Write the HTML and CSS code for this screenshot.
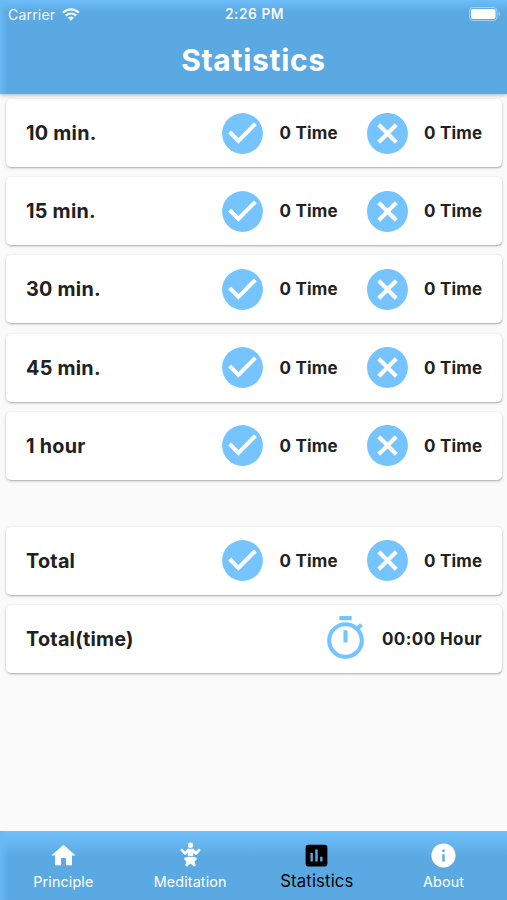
FILE: index.html
```html
<!DOCTYPE html>
<html lang="en">
<head>
<meta charset="utf-8">
<title>Statistics</title>
<link rel="stylesheet" href="styles.css">
</head>
<body>
<svg class="defs" aria-hidden="true">
  <symbol id="check" viewBox="0 0 24 24"><circle cx="12" cy="12" r="10"/><path class="cut" d="m10 17-5-5 1.41-1.41L10 14.17l7.59-7.59L19 8z"/></symbol>
  <symbol id="cross" viewBox="0 0 24 24"><path d="M12 2C6.47 2 2 6.47 2 12s4.47 10 10 10 10-4.47 10-10S17.53 2 12 2zm5 13.59L15.59 17 12 13.41 8.41 17 7 15.59 10.59 12 7 8.41 8.41 7 12 10.59 15.59 7 17 8.41 13.41 12 17 15.59z"/></symbol>
  <symbol id="timer" viewBox="0 0 24 24"><path d="M15 1H9v2h6V1zm-4 13h2V8h-2v6zm8.03-6.61 1.42-1.42c-.43-.51-.9-.99-1.41-1.41l-1.42 1.42C16.07 4.74 14.12 4 12 4c-4.97 0-9 4.03-9 9s4.02 9 9 9 9-4.03 9-9c0-2.12-.74-4.07-1.97-5.61zM12 20c-3.87 0-7-3.13-7-7s3.13-7 7-7 7 3.13 7 7-3.13 7-7 7z"/></symbol>
</svg>
<header class="header">
  <div class="status">
    <div class="carrier"><span>Carrier</span>
      <svg class="wifi" viewBox="0 0 18 13"><path d="M1 4.7C5.5.3 12.5.3 17 4.7M3.8 7.6c3-2.8 7.4-2.8 10.4 0"/><path class="dot" d="M9 12.8 5.9 9.7c1.8-1.5 4.4-1.5 6.2 0z"/></svg>
    </div>
    <div class="clock">2:26 PM</div>
    <svg class="battery" viewBox="0 0 32 14"><rect class="shell" x=".5" y=".5" width="27.5" height="13" rx="3.5"/><rect x="2" y="2" width="24.5" height="10" rx="2"/><path class="tip" d="M29.6 4.8c2 .6 2 3.8 0 4.4z"/></svg>
  </div>
  <h1 class="title">Statistics</h1>
</header>
<main class="content">
  <section class="list">
    <div class="card"><span class="label">10 min.</span><svg class="icon"><use href="#check"/></svg><span class="count">0 Time</span><svg class="icon next"><use href="#cross"/></svg><span class="count">0 Time</span></div>
    <div class="card"><span class="label">15 min.</span><svg class="icon"><use href="#check"/></svg><span class="count">0 Time</span><svg class="icon next"><use href="#cross"/></svg><span class="count">0 Time</span></div>
    <div class="card"><span class="label">30 min.</span><svg class="icon"><use href="#check"/></svg><span class="count">0 Time</span><svg class="icon next"><use href="#cross"/></svg><span class="count">0 Time</span></div>
    <div class="card"><span class="label">45 min.</span><svg class="icon"><use href="#check"/></svg><span class="count">0 Time</span><svg class="icon next"><use href="#cross"/></svg><span class="count">0 Time</span></div>
    <div class="card"><span class="label">1 hour</span><svg class="icon"><use href="#check"/></svg><span class="count">0 Time</span><svg class="icon next"><use href="#cross"/></svg><span class="count">0 Time</span></div>
  </section>
  <section class="list">
    <div class="card"><span class="label">Total</span><svg class="icon"><use href="#check"/></svg><span class="count">0 Time</span><svg class="icon next"><use href="#cross"/></svg><span class="count">0 Time</span></div>
    <div class="card"><span class="label">Total(time)</span><svg class="icon"><use href="#timer"/></svg><span class="count hours">00:00 Hour</span></div>
  </section>
</main>
<nav class="tabs">
  <a class="tab"><svg viewBox="0 0 24 24"><path d="M10 20v-6h4v6h5v-8h3L12 3 2 12h3v8z"/></svg><span>Principle</span></a>
  <a class="tab"><svg viewBox="-1.8 -1.2 27.6 27.6"><circle cx="12" cy="2.8" r="2.5"/><path d="M9.2 6.2h5.6l2.4 2.7 2.9-3 1.7 1.5-3.9 4.4h-1.5L14.6 10v3.2H9.4V10l-1.8 1.8H6.1L2.2 7.4l1.7-1.5 2.9 3z"/><path d="M9 14h6l2.9.7v1.8l-2.1 2 1.3 3.3-1.8 1.5-2.3-2.3-1-.3-1 .3-2.3 2.3-1.8-1.5 1.3-3.3-2.1-2v-1.8z"/></svg><span>Meditation</span></a>
  <a class="tab active"><svg viewBox="0 0 24 24"><path d="M19 3H5c-1.1 0-2 .9-2 2v14c0 1.1.9 2 2 2h14c1.1 0 2-.9 2-2V5c0-1.1-.9-2-2-2zM9 17H7v-7h2v7zm4 0h-2V7h2v10zm4 0h-2v-4h2v4z"/></svg><span>Statistics</span></a>
  <a class="tab"><svg viewBox="0 0 24 24"><path d="M12 2C6.48 2 2 6.48 2 12s4.48 10 10 10 10-4.48 10-10S17.52 2 12 2zm1 15h-2v-6h2v6zm0-8h-2V7h2v2z"/></svg><span>About</span></a>
</nav>
</body>
</html>
```
FILE: styles.css
```css
* { box-sizing: border-box; }
body {
  margin: 0;
  height: 900px;
  display: flex;
  flex-direction: column;
  overflow: hidden;
  background: #fafafa;
  color: #212121;
  font-family: Inter, Roboto, sans-serif;
}
.defs { position: absolute; width: 0; height: 0; }
.header {
  height: 94px;
  flex: none;
  background: linear-gradient(90deg, #69b9f5, rgba(105, 185, 245, 0) 7px), linear-gradient(#6cbdf9, #5aa9e2 12px);
  box-shadow: 0 1px 4px rgba(0, 0, 0, .3);
  color: #fff;
}
.status {
  height: 27px;
  padding: 0 6px 0 8px;
  display: grid;
  grid-template-columns: 1fr auto 1fr;
  align-items: center;
  font-size: 14px;
  line-height: 27px;
}
.carrier { display: flex; align-items: center; gap: 7px; letter-spacing: .2px; opacity: .92; }
.wifi { width: 18px; height: 13px; fill: none; stroke: #fff; stroke-width: 2.2; }
.wifi .dot { fill: #fff; stroke: none; }
.clock { padding-top: 1px; font-size: 13.8px; font-weight: 600; letter-spacing: .5px; opacity: .93; }
.battery { width: 32px; height: 14px; justify-self: end; fill: #fff; }
.battery .shell { fill: none; stroke: #fff; stroke-opacity: .45; }
.battery .tip { opacity: .45; }
.title {
  margin: 0;
  text-align: center;
  font-size: 30px;
  line-height: 66px;
  font-weight: 700;
  letter-spacing: .7px;
}
.content {
  flex: 1;
  padding: 5px 5px 0 6px;
  display: flex;
  flex-direction: column;
  gap: 47px;
}
.list { display: flex; flex-direction: column; gap: 10.2px; }
.card {
  height: 68px;
  padding: 0 20px;
  display: flex;
  align-items: center;
  background: #fff;
  border-radius: 5px;
  box-shadow: 0 1px 3px rgba(0, 0, 0, .24), 1px 2px 1px -1px rgba(0, 0, 0, .12);
}
.label { flex: 1; font-size: 19.8px; font-weight: 650; letter-spacing: .25px; }
.icon { width: 49px; height: 49px; margin-right: 12.5px; fill: #75c4ff; }
.icon.next { margin-left: 25px; }
.cut { fill: #fff; }
.count { width: 58px; font-size: 17px; font-weight: 650; letter-spacing: .2px; white-space: nowrap; }
.count.hours { width: 100px; letter-spacing: .4px; }
.tabs {
  height: 69px;
  flex: none;
  display: flex;
  background: linear-gradient(90deg, #69b9f5, rgba(105, 185, 245, 0) 8px), linear-gradient(#70c0fb, #5aa9e2 26px);
  color: #fff;
}
.tab {
  flex: 1;
  padding-top: 10px;
  display: flex;
  flex-direction: column;
  align-items: center;
  font-size: 14.3px;
  line-height: 23px;
  letter-spacing: .15px;
}
.tab svg { width: 29px; height: 29px; fill: currentColor; }
.tab.active { color: #000; font-size: 16.7px; line-height: 22px; }
```
